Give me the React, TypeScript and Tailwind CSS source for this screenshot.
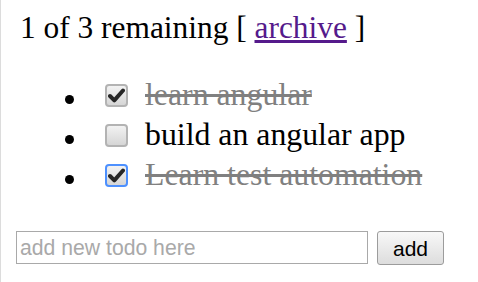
import React from "react";

function Check({ checked, focused }: { checked: boolean; focused?: boolean }) {
  return (
    <span
      className={
        "relative flex h-[23px] w-[23px] items-center justify-center rounded-[4px] border-2 bg-gradient-to-b from-[#f2f2f2] to-[#d6d6d6] " +
        (focused ? "border-[#4d90fe]" : "border-[#b3b3b3]")
      }
    >
      {checked && (
        <svg width="17" height="15" viewBox="0 0 17 15">
          <path d="M2 8 L6.3 12.3 L15 2.5" fill="none" stroke="#262626" strokeWidth="4" strokeLinecap="round" strokeLinejoin="round" />
        </svg>
      )}
    </span>
  );
}

const todos = [
  { text: "learn angular", done: true },
  { text: "build an angular app", done: false },
  { text: "Learn test automation", done: true, focused: true },
];

export default function App() {
  return (
    <div
      className="h-[282px] w-[478px] overflow-hidden border-l border-[#dcdcdc] bg-white text-[32px] text-black"
      style={{ fontFamily: '"Liberation Serif", "Times New Roman", serif' }}
    >
      <div className="box-content h-[40px] pl-[19px] pt-[8px] text-[31.4px] leading-[40px]">
        1 of 3 remaining [ <a href="#" className="text-[#551a8b] underline">archive</a> ]
      </div>
      <ul className="mt-[27px] flex flex-col text-[31.8px]">
        {todos.map((t) => (
          <li key={t.text} className="flex h-[40px] items-center leading-[40px]">
            <span className="ml-[64px] mt-[8px] h-[9px] w-[9px] rounded-full bg-black" />
            <span className="ml-[31px]">
              <Check checked={t.done} focused={t.focused} />
            </span>
            <span className={"ml-[17px] " + (t.done ? "text-[#808080] line-through" : "")}>{t.text}</span>
          </li>
        ))}
      </ul>
      <div
        className="mt-[36px] flex items-start pl-[15px]"
        style={{ fontFamily: '"Liberation Sans", Arial, sans-serif' }}
      >
        <input
          className="h-[33px] w-[352px] border border-[#a9a9a9] px-[3px] text-[21.2px] text-black placeholder:text-[#a9a9a9] outline-none"
          placeholder="add new todo here"
        />
        <button className="ml-[9px] h-[34px] w-[67px] rounded-[3px] border border-[#9c9c9c] bg-gradient-to-b from-[#f8f8f8] to-[#dddddd] text-[21px] leading-none text-black">
          add
        </button>
      </div>
    </div>
  );
}
